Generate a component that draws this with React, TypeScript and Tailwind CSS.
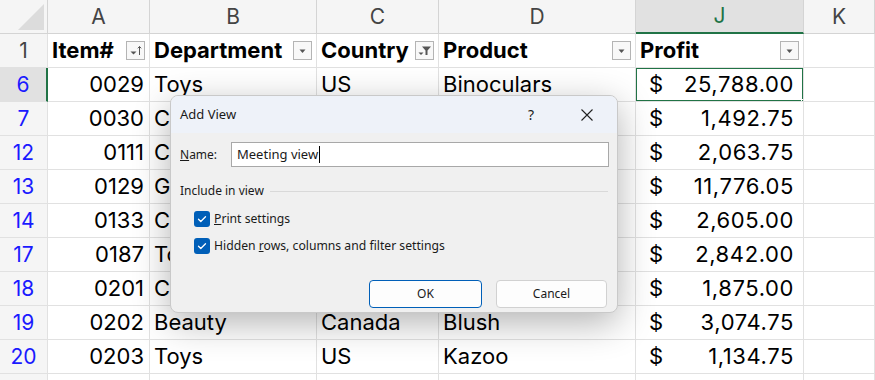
import React from 'react';

const letters = ['A', 'B', 'C', 'D', 'J', 'K'];

type Row = { n: string; item: string; dept: string; country: string; product: string; profit: string };

const rows: Row[] = [
  { n: '6', item: '0029', dept: 'Toys', country: 'US', product: 'Binoculars', profit: '25,788.00' },
  { n: '7', item: '0030', dept: 'Clothing', country: 'US', product: 'Jacket', profit: '1,492.75' },
  { n: '12', item: '0111', dept: 'Clothing', country: 'US', product: 'Scarf', profit: '2,063.75' },
  { n: '13', item: '0129', dept: 'Games', country: 'US', product: 'Chess', profit: '11,776.05' },
  { n: '14', item: '0133', dept: 'Clothing', country: 'US', product: 'Hat', profit: '2,605.00' },
  { n: '17', item: '0187', dept: 'Toys', country: 'US', product: 'Yo-yo', profit: '2,842.00' },
  { n: '18', item: '0201', dept: 'Clothing', country: 'US', product: 'Gloves', profit: '1,875.00' },
  { n: '19', item: '0202', dept: 'Beauty', country: 'Canada', product: 'Blush', profit: '3,074.75' },
  { n: '20', item: '0203', dept: 'Toys', country: 'US', product: 'Kazoo', profit: '1,134.75' },
];

const grid = 'grid grid-cols-[48px_102px_167px_122px_197px_168px_71px]';
const cell = 'h-[34px] border-r border-b border-[#e1e1e1] flex items-center overflow-hidden whitespace-nowrap';

function FilterBtn({ kind }: { kind: 'plain' | 'sort' | 'filter' }) {
  return (
    <div className="w-[19px] h-[19px] border border-[#b4b4b4] bg-[#f8f8f8] flex items-center justify-center shrink-0">
      <svg width="17" height="17" viewBox="0 0 17 17">
        {kind === 'plain' && <path d="M5.5 7.5h6l-3 3.5z" fill="#555" />}
        {kind === 'sort' && (
          <>
            <path d="M3.5 9.5h6l-3 3z" fill="#555" />
            <path d="M12.5 13V4.5M10.8 6.3l1.7-1.8 1.7 1.8" stroke="#555" strokeWidth="1" fill="none" />
          </>
        )}
        {kind === 'filter' && (
          <>
            <path d="M6 4.5h9l-3.5 4v4.5h-2V8.5z" fill="#555" />
            <path d="M2.5 10.5h5l-2.5 2.5z" fill="#555" />
          </>
        )}
      </svg>
    </div>
  );
}

function Check() {
  return (
    <div className="w-[16px] h-[16px] rounded-[3px] bg-[#005fb8] flex items-center justify-center shrink-0">
      <svg width="12" height="12" viewBox="0 0 12 12">
        <path d="M2.5 6.2l2.3 2.3 4.7-4.8" stroke="#fff" strokeWidth="1.3" fill="none" strokeLinecap="round" strokeLinejoin="round" />
      </svg>
    </div>
  );
}

function Dialog() {
  return (
    <div className="absolute left-[170px] top-[95px] w-[448px] h-[218px] rounded-[8px] bg-[#f0f0f0] border border-[#c9c9c9] shadow-[0_10px_36px_rgba(0,0,0,0.3)] overflow-hidden font-['Noto_Sans',sans-serif] text-[12px] text-[#1a1a1a]">
      <div className="h-[37px] bg-[#eef2f9] flex items-center pl-[9px] text-[13px]">
        <span className="flex-1">Add View</span>
        <span className="w-[30px] text-center text-[14px] mr-[34px]">?</span>
        <svg width="14" height="14" viewBox="0 0 14 14" className="mr-[23px]">
          <path d="M1.5 1.5l11 11M12.5 1.5l-11 11" stroke="#222" strokeWidth="1.1" />
        </svg>
      </div>
      <div className="flex items-center mt-[9px] pl-[9px]">
        <span className="w-[51px]"><u>N</u>ame:</span>
        <div className="w-[378px] h-[25px] border border-[#a8a8a8] bg-white flex items-center pl-[5px] text-[13px]">
          Meeting view<span className="w-px h-[17px] bg-black ml-px" />
        </div>
      </div>
      <div className="flex items-center mt-[15px] pl-[9px] pr-[9px] gap-[6px]">
        <span>Include in view</span>
        <div className="flex-1 h-px bg-[#d9d9d9]" />
      </div>
      <div className="flex flex-col gap-[9px] mt-[10px] pl-[23px] text-[12.2px]">
        <div className="flex items-center gap-[4px]">
          <Check />
          <span><u>P</u>rint settings</span>
        </div>
        <div className="flex items-center gap-[4px]">
          <Check />
          <span>Hidden <u>r</u>ows, columns and filter settings</span>
        </div>
      </div>
      <div className="flex justify-end gap-[14px] mt-[24px] pr-[10px]">
        <div className="w-[113px] h-[28px] rounded-[4px] border border-[#005fb8] bg-[#fdfdfd] flex items-center justify-center">OK</div>
        <div className="w-[111px] h-[28px] rounded-[4px] border border-[#d1d1d1] bg-[#fdfdfd] flex items-center justify-center">Cancel</div>
      </div>
    </div>
  );
}

export default function App() {
  return (
    <div className="relative w-[875px] h-[380px] overflow-hidden bg-white font-['Inter',sans-serif] text-black">
      {/* column letters */}
      <div className={`${grid} h-[34px] bg-[#f5f5f5]`}>
        <div className="h-[34px] border-r border-b border-[#d4d4d4] relative">
          <div className="absolute right-[3px] bottom-[3px] w-0 h-0 border-l-[26px] border-l-transparent border-b-[26px] border-b-[#dcdcdc]" />
        </div>
        {letters.map((l) => (
          <div
            key={l}
            className={`h-[34px] border-r border-[#d4d4d4] flex items-center justify-center text-[21px] ${
              l === 'J' ? 'bg-[#e1e1e1] border-b-2 border-b-[#217346] text-[#217346]' : 'border-b text-[#444]'
            }`}
          >
            {l}
          </div>
        ))}
      </div>
      {/* header row 1 */}
      <div className={grid}>
        <div className={`${cell} justify-center text-[21px] text-[#444] bg-[#f5f5f5] border-[#d4d4d4]`}>1</div>
        <div className={`${cell} justify-between px-[4px] font-bold text-[22px]`}>
          Item# <FilterBtn kind="sort" />
        </div>
        <div className={`${cell} justify-between px-[4px] font-bold text-[22px]`}>
          Department <FilterBtn kind="plain" />
        </div>
        <div className={`${cell} justify-between px-[4px] font-bold text-[22px]`}>
          Country <FilterBtn kind="filter" />
        </div>
        <div className={`${cell} justify-between px-[4px] font-bold text-[22px]`}>
          Product <FilterBtn kind="plain" />
        </div>
        <div className={`${cell} justify-between px-[4px] font-bold text-[22px]`}>
          Profit <FilterBtn kind="plain" />
        </div>
        <div className={cell} />
      </div>
      {rows.map((r, i) => (
        <div key={r.n} className={`${grid} text-[22px]`}>
          <div
            className={`${cell} justify-center text-[21px] text-[#1a1aff] border-[#d4d4d4] ${
              i === 0 ? 'bg-[#e1e1e1] border-r-2 border-r-[#217346]' : 'bg-[#f5f5f5]'
            }`}
          >
            {r.n}
          </div>
          <div className={`${cell} justify-end pr-[5px]`}>{r.item}</div>
          <div className={`${cell} pl-[4px]`}>{r.dept}</div>
          <div className={`${cell} pl-[4px]`}>{r.country}</div>
          <div className={`${cell} pl-[4px]`}>{r.product}</div>
          <div className={`${cell} relative justify-between pl-[13px] pr-[9px]`}>
            <span>$</span>
            <span className="tracking-[0.6px]">{r.profit}</span>
            {i === 0 && (
              <>
                <div className="absolute left-[-1px] top-[-1px] right-[-1px] bottom-[-1px] border-2 border-[#217346]" />
                <div className="absolute right-[-4px] bottom-[-4px] w-[6px] h-[6px] bg-[#217346] border border-white" />
              </>
            )}
          </div>
          <div className={cell} />
        </div>
      ))}
      <div className={grid}>
        <div className={`${cell} bg-[#f5f5f5] border-[#d4d4d4]`} />
        <div className={cell} />
        <div className={cell} />
        <div className={cell} />
        <div className={cell} />
        <div className={cell} />
        <div className={cell} />
      </div>
      <Dialog />
    </div>
  );
}
